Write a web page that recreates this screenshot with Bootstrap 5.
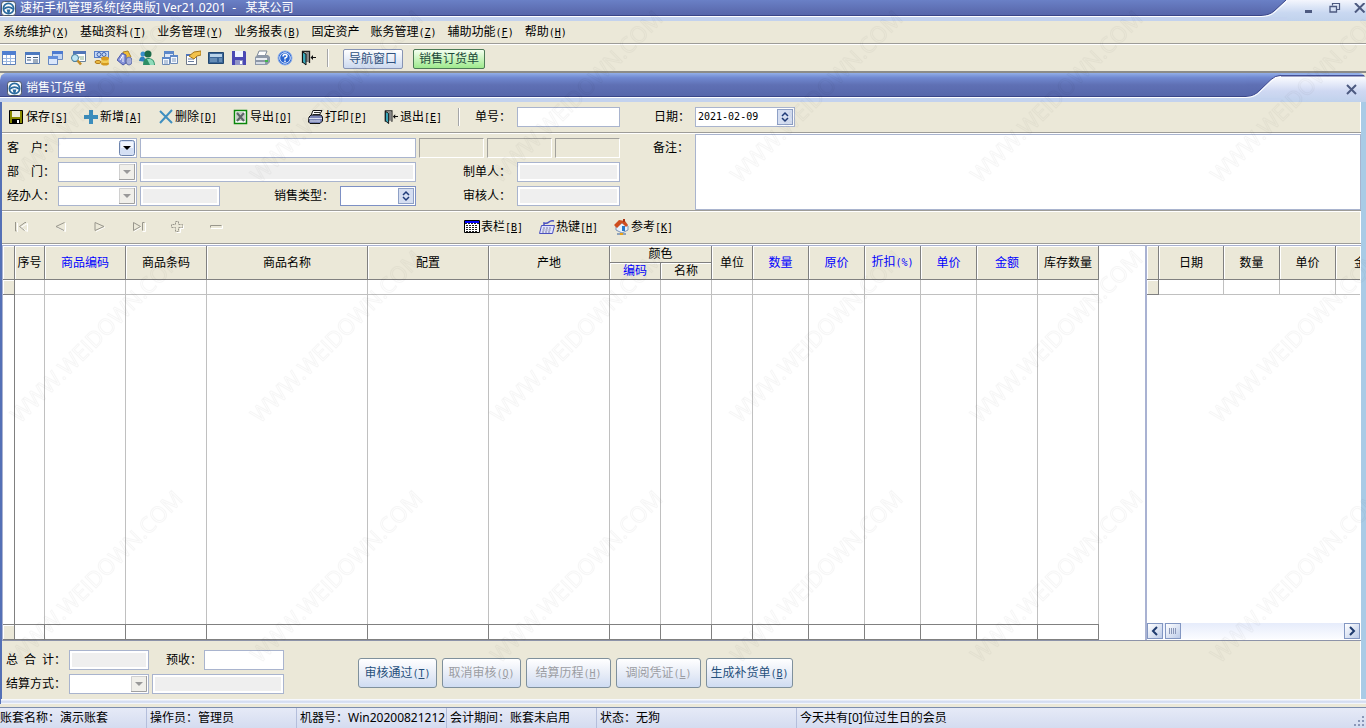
<!DOCTYPE html>
<html lang="zh-CN">
<head>
<meta charset="utf-8">
<meta name="viewport" content="width=device-width, initial-scale=1">
<title>速拓手机管理系统[经典版]</title>
<link href="https://cdn.jsdelivr.net/npm/bootstrap@5.3.0/dist/css/bootstrap.min.css" rel="stylesheet">
<style>
:root{--face:#ebe8d8;--edge:#9d9c98;--line:#a9b4ce;--navy:#3b4688}
body{font:12px/16px "Noto Sans","Noto Sans CJK SC",sans-serif;color:#000;background:var(--face);min-height:100vh;overflow:hidden}
a{color:inherit;text-decoration:none}
.hk{font-family:"DejaVu Sans Mono",monospace;font-size:10px}
.groove{border-bottom:1px solid var(--edge);box-shadow:0 1px #fff}
.plain{border:0;background:none;padding:0;color:inherit;white-space:nowrap;display:flex;align-items:center}
svg{display:block;flex:none}
.vsep{width:2px;height:18px;border-left:1px solid #a5a6a8;border-right:1px solid #fff}

/* window captions */
.caption{height:21px;background:linear-gradient(#f4f6fd,#c9d8f1 60%,#c0d2ec)}
.caption-fill{height:17px;background:linear-gradient(#6a80c6,#5c6cb0 70%,#5666aa);border-bottom:1px solid #fff;box-shadow:inset 0 -1px var(--navy),0 4px #c3d2ee;color:#fff;white-space:nowrap;padding-left:1px}
.caption-fill.inner{height:25px;background:linear-gradient(#92aee8,#7088d0 20%,#5f70b4 50%,#5666aa);padding:6px 0 0 3px}
.caption.doc{height:29px;background:linear-gradient(#92aee8 2px,#454f94 2px,#454f94 3px,#fafbff 4px,#cfd8f2 18px,#c0d2ec)}
.winbtns{color:#4d5a80;gap:13px}
.winbtns.top-btns{padding:3px 0 0 17px}

.menu-row{height:23px;padding-left:3px;gap:11px}
.toolbar{height:29px;padding-left:1px;gap:7px;border-bottom:2px solid #8c8c88}
.tabbtn{height:20px;padding:0 5px;margin:3px 0 0 7px;border:1px solid #8794b4;border-radius:2px;background:linear-gradient(#fff,#ccd9ef);color:#2f5280;line-height:18px}
.tabbtn.on{margin-left:3px;border-color:#4c7a55;background:linear-gradient(#f4fff0,#9ee98c);color:#1c4a3a}

/* document frame */
.doc{border-radius:7px 7px 0 0}
.frame{border-left:2px solid #5470b6;border-right:5px solid #a9cbe6;box-shadow:inset -1px 0 #fff}
.cmd{height:31px;padding-left:6px}
.cmd .plain{width:75px;gap:2px}
.field{height:20px;border:1px solid var(--line);border-radius:0;background:#fff;padding:0 2px;font:10px/18px "DejaVu Sans Mono",monospace;min-width:0;display:block;color:#000}
.field[readonly]{background:#efefef;box-shadow:inset 0 0 0 2px #fff}
.w79{width:79px}.w80{width:80px}.w103{width:103px}.w132{width:132px}.w276{width:276px}
select.field{appearance:none;background:#fff no-repeat right 1px center/16px 16px}
select.drop{background-image:url("data:image/svg+xml,%3Csvg xmlns='http://www.w3.org/2000/svg' viewBox='0 0 16 16'%3E%3Crect x='.5' y='.5' width='15' height='15' rx='2' fill='%23d5e0f4' stroke='%236d84ad'/%3E%3Cpath d='M2 2h12v6H2z' fill='%23f2f6fd'/%3E%3Cpath d='M4 6h8l-4 4z'/%3E%3C/svg%3E")}
select.drop:disabled{opacity:1;background-image:url("data:image/svg+xml,%3Csvg xmlns='http://www.w3.org/2000/svg' viewBox='0 0 16 16'%3E%3Cpath d='M0 0h16v16H0z' fill='%23f0efea'/%3E%3Cpath d='M15.500 0v15.500H0' fill='none' stroke='%23a0a0a0'/%3E%3Cpath d='M.5 15V.5H15' fill='none' stroke='%23d0d0d0'/%3E%3Cpath d='M4 6h8l-4 4z' fill='%23999'/%3E%3C/svg%3E")}
select.spin{width:76px;border-color:#7d90c4;background-image:url("data:image/svg+xml,%3Csvg xmlns='http://www.w3.org/2000/svg' viewBox='0 0 16 16'%3E%3Crect x='.5' y='.5' width='15' height='15' fill='%23d5def1' stroke='%238ea0c6'/%3E%3Cpath d='M5 7l3-3 3 3M5 9l3 3 3-3' fill='none' stroke='%231f3b78' stroke-width='1.500'/%3E%3C/svg%3E")}
.datebox{width:100px;height:20px;border:1px solid var(--line);background:#fff;padding-right:1px}
.datebox input{border:0;width:78px;padding:0 2px;height:18px;font:10px/18px "DejaVu Sans Mono",monospace}
.cmd .datebox .plain{width:16px}
.sunk{width:65px;height:20px;border:1px solid #fff;border-top-color:#a2a19c;border-left-color:#a2a19c}
.form-area{height:78px}
.form-rows{padding:5px 0 0 5px;gap:4px}
.lab{width:51px;white-space:nowrap}
.lab-no{width:42px;margin-left:15px}
.lab-day{width:41px;margin-left:34px}
.lab-user{width:54px;margin-left:47px}
.lab-type{width:66px;margin-left:54px;white-space:nowrap}
.lab-memo{width:42px;margin-left:33px;padding-top:7px}
.g3{gap:3px}
.me3{margin-right:3px}
.memo{height:76px;margin-top:1px;border:1px solid var(--line);resize:none;background:#fff;flex:1;min-width:0;padding:2px}
.nav-row{height:33px;padding-left:12px}
.rec{gap:23px;width:450px}
.rec button{border:0;background:none;padding:0}
.w75{width:75px}

/* data grids */
.sheet{background:#fff;margin-top:1px;border-top:1px solid #aab2d0;border-left:1px solid #aab2d0;border-bottom:1px solid #8d93a8;min-height:200px}
.cells{table-layout:fixed;border-collapse:separate;border-spacing:0;flex:none;line-height:14px}
.cells th,.cells td{padding:0;border-right:1px solid #c0c0c0;overflow:hidden;white-space:nowrap}
.cells th{font-weight:400;text-align:center;background:var(--face);border-right:1px solid #808080;border-bottom:1px solid #808080;box-shadow:inset 1px 1px #fff;height:17px}
.cells th.tall{height:34px}
.cells .key{color:#00f}
.cells .one td{height:15px;border-bottom:1px solid #c0c0c0}
.cells .sum td{height:16px;border-top:1px solid #808080;border-bottom:1px solid #808080;border-right-color:#808080}
.cells tbody td:first-child{border-right-color:#808080}
.cells td.mark-cell{background:var(--face);box-shadow:inset 1px 1px #fff;border-bottom-color:#808080}
.left-cells{width:1096px}
.right-cells{width:250px}
.c12{width:12px}.c30{width:30px}.c41{width:41px}.c51{width:51px}.c56{width:56px}.c61{width:61px}.c65{width:65px}.c81{width:81px}.c121{width:121px}.c161{width:161px}
.side{width:215px;border-left:2px solid #a9b2d2;margin-right:1px;overflow:hidden}
.hscroll{height:16px;margin-bottom:1px;background:linear-gradient(#e6ecfb,#fbfcff)}
.hscroll button{width:16px;height:16px;border:1px solid #8397c2;background:linear-gradient(135deg,#fff,#bccbe8);padding:0}
.hscroll .thumb{margin-left:2px}

.foot{height:58px;padding-left:4px}
.foot-fields{gap:4px;padding-top:9px}
.lab-sum{width:63px}
.lab-pre{width:38px;margin-left:17px}
.foot-btns{gap:5px;margin-left:74px;padding-top:17px}
.push{width:79px;height:30px;border:1px solid #7f909c;border-radius:3px;background:linear-gradient(#fff,#e4eaf6 60%,#cfdcf2);color:#26507c;padding:0;white-space:nowrap}
.push.mid{width:85px}.push.wide{width:87px}
.push:disabled{color:#9b9da3}
.frame-end{height:5px;background:linear-gradient(#fff,#ccd6ee 60%,#fff);border-left:1px solid #5470b6}
.status{height:21px;margin-top:3px;border-top:1px solid #7b8cac;background:linear-gradient(#e6eaf7,#d4dcf0);white-space:nowrap}
.status div{width:150px;padding-left:3px;overflow:hidden;border-right:1px solid #b4bedb;line-height:20px}
.status .first{width:147px;padding-left:0}
.status .w200{width:200px}
.veil{pointer-events:none}
</style>
</head>
<body class="d-flex flex-column position-relative">

<svg width="0" height="0" class="position-absolute" aria-hidden="true">
 <symbol id="wheel" viewBox="0 0 16 16"><rect x=".5" y=".5" width="15" height="15" rx="3" fill="#f4f8fb" stroke="#46505c"/><circle cx="8" cy="8" r="5.500" fill="#fff" stroke="#2a6b9f" stroke-width="1.800"/><path d="M3 8.500q5-4 10 0" fill="none" stroke="#2a6b9f" stroke-width="2"/><path d="M6 9h4l-1 4H7z" fill="#2a6b9f"/></symbol>
 <symbol id="door" viewBox="0 0 16 16"><path d="M2 1.500h7.500V13M2.500 1v12" fill="none" stroke="#222" stroke-width="1.300"/><path d="M6 2h3v10H6z" fill="#888"/><path d="M2.500 2L6 4v11l-3.500-3z" fill="#3aa6b8" stroke="#111"/><path d="M10.500 7.500L13 5v2h3v1h-3v2z" fill="#111"/></symbol>
</svg>

<header class="caption d-flex">
 <div class="caption-fill flex-grow-1 d-flex align-items-center">
  <svg width="15" height="15"><use href="#wheel"/></svg><span class="ms-1">速拓手机管理系统[经典版] Ver21.0201 &nbsp;- &nbsp; 某某公司</span>
 </div>
 <svg width="26" height="21" viewBox="0 0 26 21" aria-hidden="true"><defs><linearGradient id="g1" x2="0" y2="1"><stop stop-color="#6a80c6"/><stop offset="1" stop-color="#5666aa"/></linearGradient></defs><path d="M0 17h26v4H0z" fill="#c3d2ee"/><path d="M0 0h25L13 11Q8 15.500 0 15.500z" fill="url(#g1)"/><path d="M25 0L13 11Q8 15.500 0 15.500" fill="none" stroke="#3b4688"/><path d="M26 1L14 12Q9 16.500 0 16.500" fill="none" stroke="#fff"/></svg>
 <div class="winbtns top-btns d-flex align-items-start">
  <button class="plain" aria-label="最小化"><svg width="12" height="10"><path d="M1 7h7v3H1z" fill="currentColor"/></svg></button>
  <button class="plain" aria-label="还原"><svg width="12" height="10" viewBox="0 0 12 10" fill="none" stroke="currentColor"><path d="M3.500 2.500V.5h7v6H8" stroke-width="1.200"/><path d="M1 3.500h6.500v5.500H1z" stroke-width="1.300"/></svg></button>
  <button class="plain" aria-label="关闭"><svg width="12" height="10" viewBox="0 0 12 10"><path d="M1 0l9.500 9.500M10.500 0L1 9.500" stroke="currentColor" stroke-width="2"/></svg></button>
 </div>
</header>

<nav class="menu-row groove d-flex align-items-center">
 <a href="#">系统维护<span class="hk">(<u>X</u>)</span></a>
 <a href="#">基础资料<span class="hk">(<u>T</u>)</span></a>
 <a href="#">业务管理<span class="hk">(<u>Y</u>)</span></a>
 <a href="#">业务报表<span class="hk">(<u>B</u>)</span></a>
 <a href="#">固定资产</a>
 <a href="#">账务管理<span class="hk">(<u>Z</u>)</span></a>
 <a href="#">辅助功能<span class="hk">(<u>F</u>)</span></a>
 <a href="#">帮助<span class="hk">(<u>H</u>)</span></a>
</nav>

<div class="toolbar d-flex align-items-center">
 <button class="plain" aria-label="表格"><svg width="16" height="16"><path d="M1.500 1.500h13v13h-13z" fill="#fff" stroke="#5a7db8"/><path d="M1 1h14v4H1z" fill="#4f7fd0"/><path d="M2 8.500h12M2 11.500h12M5.500 5v9M9.500 5v9" stroke="#9db9e0"/></svg></button>
 <button class="plain" aria-label="窗体"><svg width="16" height="16"><path d="M1.500 2.500h14v11h-14z" fill="#f6f9ff" stroke="#5f7fae"/><path d="M1 2h15v3H1z" fill="#4c79bf"/><path d="M3 7.500h4M3 10h4M9 7.500h5M9 10h5M9 12h5" stroke="#47607c"/></svg></button>
 <button class="plain" aria-label="层叠"><svg width="16" height="16"><path d="M5.500 1.500h10v8h-10z" fill="#c5d7f2" stroke="#6888c0"/><path d="M5 1h11v3H5z" fill="#4d7bd0"/><path d="M1.500 6.500h9v8h-9z" fill="#dbe7fa" stroke="#6888c0"/><path d="M1 6h10v3H1z" fill="#638fdc"/></svg></button>
 <button class="plain" aria-label="查找"><svg width="16" height="16"><path d="M3.500 1.500h12v10h-12z" fill="#fff" stroke="#67829c"/><path d="M3 1h13v3H3z" fill="#5177b8"/><path d="M9 7h5M10 9h4" stroke="#8db08d"/><circle cx="5" cy="8" r="3.500" fill="#bfe6f4" stroke="#417b9d"/><path d="M7.500 10.500L11 14.500" stroke="#c28b26" stroke-width="2.500"/></svg></button>
 <button class="plain" aria-label="资金"><svg width="17" height="16"><path d="M1 1h15v7H1z" fill="#5a7fc8"/><path d="M2 2h13v5H2z" fill="#c4d7f5"/><circle cx="6" cy="4.500" r="2" fill="none" stroke="#3c62b0"/><circle cx="11" cy="4.500" r="2" fill="none" stroke="#3c62b0"/><ellipse cx="12" cy="13.500" rx="4" ry="2" fill="#d49a20"/><ellipse cx="12" cy="11" rx="4" ry="2" fill="#f3ce58"/><ellipse cx="12" cy="8.500" rx="4" ry="2" fill="#d99c23"/><ellipse cx="5" cy="12" rx="3" ry="1.500" fill="#f0c34b" stroke="#b17817"/></svg></button>
 <button class="plain ms-n1" aria-label="商品"><svg width="15" height="16"><path d="M6 2l5-1 3 6-4 4H7z" fill="#f1bd35" stroke="#a8832d"/><path d="M0 10l5-7 4 2v8l-3 2z" fill="#8794dc" stroke="#4d5ba8"/><path d="M3 10l3-5v7" fill="none" stroke="#fff"/><ellipse cx="12" cy="11" rx="3" ry="4" fill="#a9b2df" stroke="#6976ad"/></svg></button>
 <button class="plain" aria-label="人员"><svg width="16" height="16"><circle cx="4" cy="4" r="2.500" fill="#3a90cf"/><path d="M0 11q1-6 5-4l3 5z" fill="#2f80bf"/><circle cx="9" cy="4" r="3.500" fill="#1d6b4a"/><path d="M4 15q0-8 6-7t6 7z" fill="#2d8f66"/><path d="M8 9l3 6h4q0-5-4-6z" fill="#8fdcbb"/></svg></button>
 <button class="plain" aria-label="单据"><svg width="16" height="16"><path d="M2.500 1.500h9v8h-9z" fill="#dfe9f8" stroke="#5a7fae"/><path d="M.5 7.500h7v7h-7zM8.500 5.500h7v8h-7z" fill="#f4f8ff" stroke="#6d8ab5"/><path d="M2 1h10v3H2zM0 7h8v2H0zM8 5h8v2H8z" fill="#5d88c9"/><path d="M2 11h4M2 13h4M10 9h4M10 11h4" stroke="#7f98ba"/></svg></button>
 <button class="plain" aria-label="属性"><svg width="16" height="16"><path d="M1.500 4.500h10v10h-10z" fill="#fff" stroke="#70798a"/><path d="M1 4h5v2H1z" fill="#4d73bb"/><path d="M3 9h6M3 11.500h6" stroke="#6a7fa0"/><path d="M4 6l5-4 7-1v4l-4 1-3 3z" fill="#f3c24b" stroke="#a97718"/></svg></button>
 <button class="plain" aria-label="收银"><svg width="16" height="16"><path d="M.5 2.500h15v11H.5z" fill="#3b6698" stroke="#22476f"/><path d="M2 4h12v3H2z" fill="#b9d3e9"/><path d="M2 9h7M2 11h7M11 9h3M11 11h3" stroke="#8eb1d2"/></svg></button>
 <button class="plain" aria-label="存盘"><svg width="16" height="16"><path d="M1 1h13l1 1v13H1z" fill="#4b49b4"/><path d="M4 1h8v6H4z" fill="#f1f5ff"/><path d="M4 10h8v5H4z" fill="#9296c8"/><path d="M9 11h2v3H9z" fill="#fff"/></svg></button>
 <button class="plain" aria-label="打印"><svg width="16" height="16"><path d="M5 1h8l-2 5H3z" fill="#fff" stroke="#7b8898"/><path d="M1 7l3-2h10l2 2v5l-3 3H1z" fill="#8e99a8"/><path d="M2 8h11v2H2z" fill="#e9edf2"/><path d="M2 12h9v2H2z" fill="#d6dce5"/><path d="M11 10h3v2h-3z" fill="#41b54b"/></svg></button>
 <button class="plain" aria-label="帮助"><svg width="16" height="16"><circle cx="8" cy="8" r="7" fill="#2a65cf" stroke="#8fb1ec"/><circle cx="8" cy="8" r="5.300" fill="none" stroke="#dbe8ff"/><path d="M6 6.500q0-2 2-2t2 1.500-2 2v1.500M8 10.500V12" fill="none" stroke="#fff" stroke-width="1.500"/></svg></button>
 <button class="plain" aria-label="退出"><svg width="16" height="16"><use href="#door"/></svg></button>
 <div class="vsep ms-1"></div>
 <button class="tabbtn">导航窗口</button>
 <button class="tabbtn on">销售订货单</button>
</div>

<main class="flex-grow-1 d-flex flex-column">
 <div class="caption doc d-flex overflow-hidden">
  <div class="caption-fill inner flex-grow-1 d-flex align-items-center">
   <svg class="ms-1" width="15" height="15"><use href="#wheel"/></svg><span class="ms-1">销售订货单</span>
  </div>
  <svg width="35" height="29" viewBox="0 0 35 29" aria-hidden="true"><defs><linearGradient id="g2" x2="0" y2="1"><stop stop-color="#92aee8"/><stop offset=".2" stop-color="#7088d0"/><stop offset=".5" stop-color="#5f70b4"/><stop offset="1" stop-color="#5666aa"/></linearGradient></defs><path d="M0 25h35v4H0z" fill="#c3d2ee"/><path d="M0 0h35v2.500q-6 0-10 4L14 17Q8 23.500 0 23.500z" fill="url(#g2)"/><path d="M35 2.500q-6 0-10 4L14 17Q8 23.500 0 23.500" fill="none" stroke="#3f4a90"/><path d="M35 3.500q-5 0-9 4L15 18Q9 24.500 0 24.500" fill="none" stroke="#fff"/></svg>
  <div class="winbtns d-flex align-items-center justify-content-end ps-5 pe-2">
   <button class="plain ps-3 pt-1" aria-label="关闭单据"><svg width="13" height="12"><path d="M2 1l9 9M11 1l-9 9" stroke="currentColor" stroke-width="2"/></svg></button>
  </div>
 </div>

 <div class="frame flex-grow-1 d-flex flex-column">
  <div class="cmd groove d-flex align-items-center">
   <button class="plain"><svg width="16" height="16"><path d="M1.500 1.500h13v13h-13z" fill="#8a8a00" stroke="#000"/><path d="M4 2h8v6H4z" fill="#f0eedd"/><path d="M4 10h8v4H4z" fill="#000"/><path d="M9 11h2v3H9z" fill="#fff"/></svg><span>保存<span class="hk">[<u>S</u>]</span></span></button>
   <button class="plain"><svg width="15" height="16"><path d="M6 1h4v5h5v4h-5v5H6v-5H1V6h5z" fill="#3c8dbc"/></svg><span>新增<span class="hk">[<u>A</u>]</span></span></button>
   <button class="plain"><svg width="15" height="16"><path d="M2 2l12 12M14 1L2 14" stroke="#3f8fc0" stroke-width="2"/></svg><span>删除<span class="hk">[<u>D</u>]</span></span></button>
   <button class="plain"><svg width="15" height="16"><path d="M1.500 1.500h12v13h-12z" fill="#fff" stroke="#0a860a" stroke-width="1.500"/><path d="M3 3h7v2h2v7H3z" fill="#c9ccc9"/><path d="M4 4l7 8M11 4l-7 8" stroke="#5d6668" stroke-width="2"/></svg><span>导出<span class="hk">[<u>O</u>]</span></span></button>
   <button class="plain"><svg width="15" height="16"><path d="M5 1.500h9l-3 5H3z" fill="#fff" stroke="#111"/><path d="M6 3.500h6M5 5.500h6" stroke="#333"/><path d="M1 8l2-2h10l1.500 2v4L12 14.500H2L.5 13z" fill="#7a85b8" stroke="#111"/><path d="M1 9.500h13M2 12h10" stroke="#dbe0f3"/></svg><span>打印<span class="hk">[<u>P</u>]</span></span></button>
   <button class="plain"><svg width="15" height="16"><use href="#door"/></svg><span>退出<span class="hk">[<u>E</u>]</span></span></button>
   <div class="vsep"></div>
   <label for="no" class="lab-no">单号：</label>
   <input id="no" class="field w103">
   <label for="day" class="lab-day">日期：</label>
   <div class="datebox d-flex align-items-center justify-content-between">
    <input id="day" value="2021-02-09">
    <button class="plain" aria-label="选择日期"><svg width="16" height="16"><rect x=".5" y=".5" width="15" height="15" fill="#d5def1" stroke="#8ea0c6"/><path d="M5 7l3-3 3 3M5 9l3 3 3-3" fill="none" stroke="#1f3b78" stroke-width="1.500"/></svg></button>
   </div>
  </div>

  <div class="form-area groove d-flex">
   <div class="form-rows d-flex flex-column">
    <div class="d-flex align-items-center g3">
     <div class="d-flex align-items-center"><label for="cust" class="lab">客　户：</label><select id="cust" class="field drop w79"></select></div>
     <input class="field w276" aria-label="客户名称">
     <div class="sunk"></div><div class="sunk"></div><div class="sunk"></div>
    </div>
    <div class="d-flex align-items-center">
     <label for="dept" class="lab">部　门：</label><select id="dept" class="field drop w79 me3" disabled></select>
     <input class="field w276" readonly aria-label="部门名称">
     <label for="maker" class="lab-user">制单人：</label><input id="maker" class="field w103" readonly>
    </div>
    <div class="d-flex align-items-center">
     <label for="agent" class="lab">经办人：</label><select id="agent" class="field drop w79 me3" disabled></select>
     <input class="field w80" readonly aria-label="经办人姓名">
     <label for="kind" class="lab-type">销售类型：</label><select id="kind" class="field spin"></select>
     <label for="audit" class="lab-user">审核人：</label><input id="audit" class="field w103" readonly>
    </div>
   </div>
   <label for="memo" class="lab-memo">备注：</label>
   <textarea id="memo" class="memo"></textarea>
  </div>

  <div class="nav-row groove d-flex align-items-center">
   <div class="rec d-flex">
    <button aria-label="首条"><svg width="16" height="16" fill="none"><path d="M3.500 4v9M13.500 4.500L6.500 8.500l7 4z" stroke="#fff"/><path d="M1.500 3v9h1M12 3.500H11L5.500 7.500l5 4" stroke="#98968c"/></svg></button>
    <button aria-label="上一条"><svg width="16" height="16" fill="none"><path d="M12.500 4v8.500L4 8.500" stroke="#fff"/><path d="M11.500 3.500L3 7.500l8 4" stroke="#98968c"/></svg></button>
    <button aria-label="下一条"><svg width="16" height="16" fill="none"><path d="M4 12.500l9-4.500" stroke="#fff"/><path d="M12 7.500l-9 4v-8z" stroke="#98968c"/></svg></button>
    <button aria-label="末条"><svg width="16" height="16" fill="none"><path d="M3 12.500L10 8.500M14.500 4v8.500h-3" stroke="#fff"/><path d="M2.500 11.500v-8l7 4zM11.500 3.500h2M11.500 3.500v8" stroke="#98968c"/></svg></button>
    <button aria-label="添加"><svg width="16" height="16" fill="none"><path d="M6.500 13.500h4v-4h3v-3" stroke="#fff"/><path d="M5.500 2.500h3v3h4v3h-4v4h-3v-4h-4v-3h4z" stroke="#98968c" stroke-dasharray="2 1"/></svg></button>
    <button aria-label="删除行"><svg width="16" height="16" fill="none"><path d="M2 9.500h11.500v-3" stroke="#fff"/><path d="M1.500 8.500v-2h11" stroke="#98968c"/></svg></button>
   </div>
   <div class="d-flex">
    <button class="plain w75"><svg width="17" height="16"><path d="M.5 1.500h15v12H.5z" fill="#fff" stroke="#000"/><path d="M1 2h14v2H1z" fill="#00f"/><path d="M1 4.500h14M2 6.500h12M2 8.500h12M2 10.500h12M2 12.500h12" stroke="#222" stroke-dasharray="2 1"/></svg><span>表栏<span class="hk">[<u>B</u>]</span></span></button>
    <button class="plain w75"><svg width="17" height="16"><path d="M2.500 6.500h13l-2 8H.5z" fill="#dfe1ff" stroke="#4a50c0"/><path d="M4 9h9M3.500 11h9M3 13h8" stroke="#7b7f9f" stroke-dasharray="2 1"/><path d="M5 6V4q3 1 5-1t5-1" fill="none" stroke="#4a50c0" stroke-width="1.500"/></svg><span>热键<span class="hk">[<u>H</u>]</span></span></button>
    <button class="plain"><svg width="17" height="16"><path d="M2 7l6-3 6 3v4l-6 3-6-3z" fill="#e6f0fc" stroke="#7d93b5"/><path d="M0 6l5-5 6 1 3 4-2 2-4-4-5 5z" fill="#cf4d1f"/><path d="M9 0h2v3H9z" fill="#a93414"/><path d="M8 7h3v5H8z" fill="#2677c8"/><path d="M3 15h9" stroke="#355f9e"/><path d="M6 15h3" stroke="#e7a31b" stroke-width="2"/></svg><span>参考<span class="hk">[<u>K</u>]</span></span></button>
   </div>
  </div>

  <div class="sheet flex-grow-1 d-flex">
   <div class="flex-grow-1 d-flex overflow-hidden">
    <table class="cells left-cells">
     <colgroup><col class="c12"><col class="c30"><col class="c81"><col class="c81"><col class="c161"><col class="c121"><col class="c121"><col class="c51"><col class="c51"><col class="c41"><col class="c56"><col class="c56"><col class="c56"><col class="c56"><col class="c61"><col class="c61"></colgroup>
     <thead>
      <tr><th rowspan="2"></th><th rowspan="2">序号</th><th rowspan="2" class="key">商品编码</th><th rowspan="2">商品条码</th><th rowspan="2">商品名称</th><th rowspan="2">配置</th><th rowspan="2">产地</th><th colspan="2">颜色</th><th rowspan="2">单位</th><th rowspan="2" class="key">数量</th><th rowspan="2" class="key">原价</th><th rowspan="2" class="key">折扣<span class="hk">(%)</span></th><th rowspan="2" class="key">单价</th><th rowspan="2" class="key">金额</th><th rowspan="2">库存数量</th></tr>
      <tr><th class="key">编码</th><th>名称</th></tr>
     </thead>
     <tbody>
      <tr class="one"><td class="mark-cell"></td><td></td><td></td><td></td><td></td><td></td><td></td><td></td><td></td><td></td><td></td><td></td><td></td><td></td><td></td><td></td></tr>
      <tr><td></td><td></td><td></td><td></td><td></td><td></td><td></td><td></td><td></td><td></td><td></td><td></td><td></td><td></td><td></td><td></td></tr>
     </tbody>
     <tfoot>
      <tr class="sum"><td class="mark-cell"></td><td></td><td></td><td></td><td></td><td></td><td></td><td></td><td></td><td></td><td></td><td></td><td></td><td></td><td></td><td></td></tr>
     </tfoot>
    </table>
   </div>
   <div class="side d-flex flex-column justify-content-between">
    <table class="cells right-cells">
     <colgroup><col class="c12"><col class="c65"><col class="c56"><col class="c56"><col class="c61"></colgroup>
     <thead><tr><th class="tall"></th><th>日期</th><th>数量</th><th>单价</th><th>金额</th></tr></thead>
     <tbody><tr class="one"><td class="mark-cell"></td><td></td><td></td><td></td><td></td></tr></tbody>
    </table>
    <div class="hscroll d-flex">
     <button aria-label="向左滚动"><svg width="14" height="14"><path d="M9 3L5 7l4 4" fill="none" stroke="#1f3b6e" stroke-width="2"/></svg></button>
     <button class="thumb" aria-label="滚动块"><svg width="14" height="14"><path d="M3.500 4v6M5.500 4v6M7.500 4v6M9.500 4v6" stroke="#8a97b8"/></svg></button>
     <button class="ms-auto" aria-label="向右滚动"><svg width="14" height="14"><path d="M5 3l4 4-4 4" fill="none" stroke="#1f3b6e" stroke-width="2"/></svg></button>
    </div>
   </div>
  </div>

  <div class="foot d-flex align-items-start">
   <div class="foot-fields d-flex flex-column">
    <div class="d-flex align-items-center">
     <label for="total" class="lab-sum">总&#8194;合&#8194;计：</label><input id="total" class="field w80" readonly>
     <label for="pre" class="lab-pre">预收：</label><input id="pre" class="field w80">
    </div>
    <div class="d-flex align-items-center">
     <label for="pay" class="lab-sum">结算方式：</label><select id="pay" class="field drop w80 me3" disabled></select>
     <input class="field w132" readonly aria-label="结算方式名称">
    </div>
   </div>
   <div class="foot-btns d-flex">
    <button class="push">审核通过<span class="hk">(<u>T</u>)</span></button>
    <button class="push" disabled>取消审核<span class="hk">(<u>Q</u>)</span></button>
    <button class="push mid" disabled>结算历程<span class="hk">(<u>H</u>)</span></button>
    <button class="push mid" disabled>调阅凭证<span class="hk">(<u>L</u>)</span></button>
    <button class="push wide">生成补货单<span class="hk">(<u>B</u>)</span></button>
   </div>
  </div>
 </div>
 <div class="frame-end"></div>
</main>

<footer class="status d-flex">
 <div class="first">账套名称：演示账套</div><div>操作员：管理员</div><div>机器号：Win20200821212</div><div>会计期间：账套未启用</div><div class="w200">状态：无狗</div><div class="flex-grow-1 border-0">今天共有[0]位过生日的会员</div>
 <svg class="align-self-end" width="14" height="14"><path d="M10 2h2v2h-2zM6 6h2v2H6zM10 6h2v2h-2zM2 10h2v2H2zM6 10h2v2H6zM10 10h2v2h-2z" fill="#8b97b8"/></svg>
</footer>

<svg class="veil position-absolute top-0 start-0 w-100 h-100" aria-hidden="true">
 <defs><pattern id="wm" width="240" height="240" patternUnits="userSpaceOnUse">
  <g font-family="Open Sans, sans-serif" font-size="22" fill="none" stroke="#000" stroke-opacity=".035">
   <text transform="translate(20 184) rotate(-45)">WWW.WEIDOWN.COM</text>
   <text transform="translate(20 424) rotate(-45)">WWW.WEIDOWN.COM</text>
  </g></pattern></defs>
 <rect width="100%" height="100%" fill="url(#wm)"/>
</svg>
<script src="https://cdn.jsdelivr.net/npm/bootstrap@5.3.0/dist/js/bootstrap.bundle.min.js"></script>
</body>
</html>
